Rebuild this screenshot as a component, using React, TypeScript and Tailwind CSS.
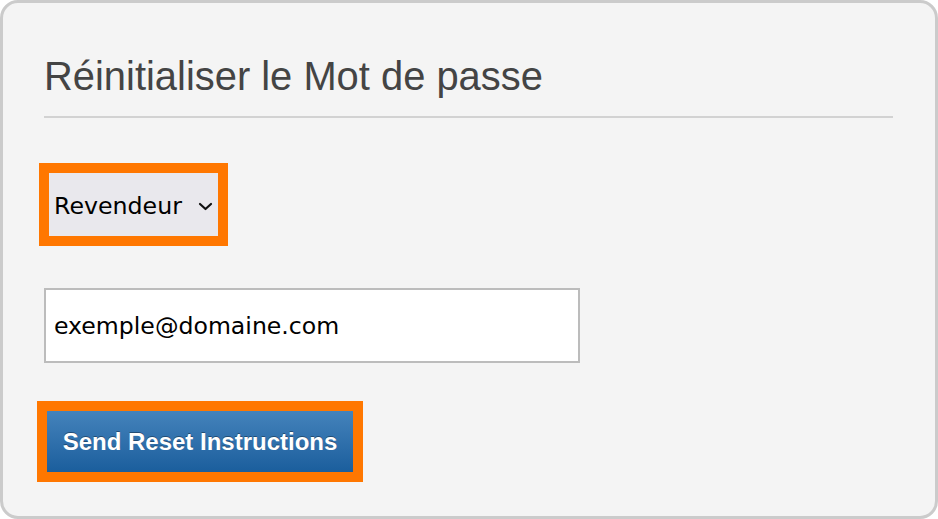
export default function App() {
  return (
    <div className="w-[938px] h-[519px] bg-white">
      <div className="w-full h-full border-[3px] border-[#cbcbcb] rounded-[18px] bg-[#f4f4f4] pl-[41px] pr-[42px] flex flex-col">
        {/* Header */}
        <h1 className="mt-[49px] text-[39.9px] leading-[48px] text-[#444444] font-['Liberation_Sans',Arial,sans-serif]">
          Réinitialiser le Mot de passe
        </h1>
        <div className="mt-[16px] h-[2px] bg-[#d2d2d2]"></div>

        {/* Account type */}
        <div className="mt-[45px] -ml-[5px] w-[189px] h-[83px] border-[10px] border-[#ff7700]">
          <div className="w-full h-full bg-[#e9e8ed] flex items-center pl-[5px] pr-[5px] justify-between font-['DejaVu_Sans',Verdana,sans-serif] text-[23.7px] text-black">
            <span className="mt-[5px]">Revendeur</span>
            <svg width="15" height="9" viewBox="0 0 15 9" fill="none" className="mt-[4px]">
              <path d="M2 2l5.5 5 5.5-5" stroke="#111" strokeWidth="2.2" strokeLinecap="round" strokeLinejoin="round" />
            </svg>
          </div>
        </div>

        {/* Email */}
        <div className="mt-[42px] w-[536px] h-[75px] border-2 border-[#bcbcbc] bg-white flex items-center pl-[8px] pt-[3px] font-['DejaVu_Sans',Verdana,sans-serif] text-[23.6px] text-black">
          exemple@domaine.com
        </div>

        {/* Submit */}
        <div className="mt-[38px] -ml-[7px] w-[326px] h-[81px] border-[10px] border-[#ff7700]">
          <button className="w-full h-full bg-gradient-to-b from-[#4483bb] to-[#1a5e9d] text-white font-bold text-[24px] font-['Liberation_Sans',Arial,sans-serif] [text-shadow:0_-1px_0_rgba(0,0,0,0.35)]">
            Send Reset Instructions
          </button>
        </div>
      </div>
    </div>
  );
}
